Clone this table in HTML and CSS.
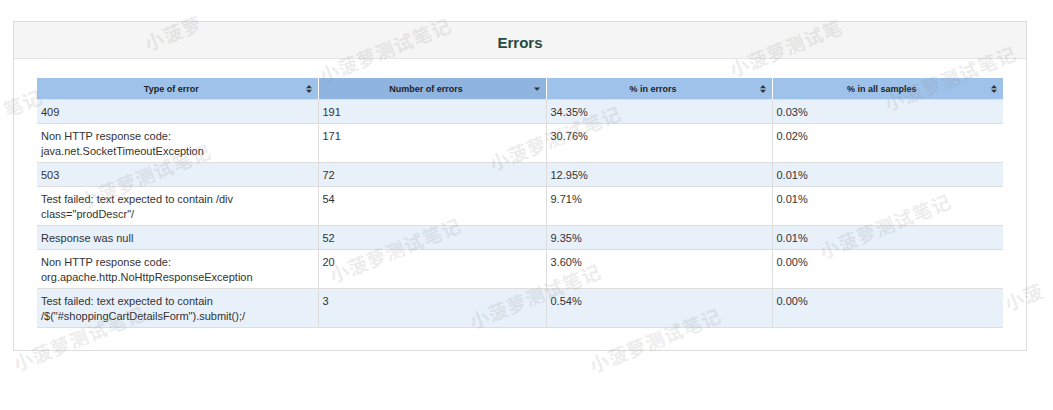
FILE: index.html
```html
<!DOCTYPE html>
<html>
<head>
<meta charset="utf-8">
<link rel="stylesheet" href="styles.css">
</head>
<body>
<div class="panel">
  <div class="panel-heading">Errors</div>
  <div class="panel-body">
    <table class="errors">
      <colgroup>
        <col class="c1"><col class="c2"><col class="c3"><col class="c4">
      </colgroup>
      <thead>
        <tr>
          <th><span class="label">Type of error</span><svg class="sort" viewBox="0 0 6 8"><path d="M3 0L6 3.3H0Z M3 8L6 4.7H0Z"/></svg></th>
          <th class="sorted"><span class="label">Number of errors</span><svg class="sort" viewBox="0 0 6 8"><path d="M0 2.5H6L3 5.8Z"/></svg></th>
          <th><span class="label">% in errors</span><svg class="sort" viewBox="0 0 6 8"><path d="M3 0L6 3.3H0Z M3 8L6 4.7H0Z"/></svg></th>
          <th><span class="label">% in all samples</span><svg class="sort" viewBox="0 0 6 8"><path d="M3 0L6 3.3H0Z M3 8L6 4.7H0Z"/></svg></th>
        </tr>
      </thead>
      <tbody>
        <tr><td>409</td><td>191</td><td>34.35%</td><td>0.03%</td></tr>
        <tr><td>Non HTTP response code:<br>java.net.SocketTimeoutException</td><td>171</td><td>30.76%</td><td>0.02%</td></tr>
        <tr><td>503</td><td>72</td><td>12.95%</td><td>0.01%</td></tr>
        <tr><td>Test failed: text expected to contain /div<br>class="prodDescr"/</td><td>54</td><td>9.71%</td><td>0.01%</td></tr>
        <tr><td>Response was null</td><td>52</td><td>9.35%</td><td>0.01%</td></tr>
        <tr><td>Non HTTP response code:<br>org.apache.http.NoHttpResponseException</td><td>20</td><td>3.60%</td><td>0.00%</td></tr>
        <tr><td>Test failed: text expected to contain<br>/$("#shoppingCartDetailsForm").submit();/</td><td>3</td><td>0.54%</td><td>0.00%</td></tr>
      </tbody>
    </table>
  </div>
</div>
<div class="watermarks" aria-hidden="true">
  <span class="wm" style="left:145px;top:30px">小菠萝</span>
  <span class="wm" style="left:320px;top:62px">小菠萝测试笔记</span>
  <span class="wm" style="left:730px;top:56px">小菠萝测试笔</span>
  <span class="wm" style="left:885px;top:90px">小菠萝测试笔记</span>
  <span class="wm" style="left:4px;top:96px">笔记</span>
  <span class="wm" style="left:490px;top:150px">小菠萝测试笔记</span>
  <span class="wm" style="left:80px;top:188px">小菠萝测试笔记</span>
  <span class="wm" style="left:820px;top:238px">小菠萝测试笔记</span>
  <span class="wm" style="left:330px;top:262px">小菠萝测试笔记</span>
  <span class="wm" style="left:470px;top:308px">小菠萝测试笔记</span>
  <span class="wm" style="left:14px;top:350px">小菠萝测试笔记</span>
  <span class="wm" style="left:590px;top:352px">小菠萝测试笔记</span>
  <span class="wm" style="left:1005px;top:290px">小菠</span>
</div>
</body>
</html>
```

FILE: styles.css
```css
html, body {
  margin: 0;
  padding: 0;
  background: #ffffff;
}
body {
  font-family: "Liberation Sans", Arial, Helvetica, sans-serif;
  color: #333333;
  position: relative;
  width: 1053px;
  height: 410px;
  overflow: hidden;
}
.panel {
  margin: 21px 26px 0 13px;
  border: 1px solid #dcdcdc;
  background: #ffffff;
}
.panel-heading {
  height: 30px;
  padding-top: 6px;
  line-height: 30px;
  background: #f5f5f5;
  border-bottom: 1px solid #e3e3e3;
  text-align: center;
  font-size: 15px;
  font-weight: bold;
  color: #24493f;
}
.panel-body {
  padding: 19px 23px 22px 23px;
}
.errors {
  width: 966px;
  border-collapse: collapse;
  table-layout: fixed;
  font-size: 11px;
}
.c1 { width: 281px; }
.c2 { width: 228px; }
.c3 { width: 226px; }
.c4 { width: 231px; }
.errors th {
  position: relative;
  height: 21px;
  padding: 0 16px 0 4px;
  background: #9fc2ea;
  border-left: 1px solid #ffffff;
  border-bottom: 1px solid #d8e2ee;
  font-size: 9px;
  font-weight: bold;
  color: #222222;
  text-align: center;
}
.errors th:first-child {
  border-left: none;
}
.errors th.sorted {
  background: #8fb4e0;
}
.sort {
  position: absolute;
  right: 6px;
  top: 7px;
  width: 6px;
  height: 8px;
  fill: #333333;
}
.errors td {
  padding: 5px 4px 3px 4px;
  line-height: 15px;
  vertical-align: top;
  border: 1px solid #dddddd;
  border-top: none;
  color: #333333;
}
.errors tbody tr:nth-child(odd) td {
  background: #e8f0fa;
}
.errors tbody tr td:first-child {
  border-left: none;
}
.errors tbody tr td:last-child {
  border-right: none;
}
.watermarks {
  position: absolute;
  left: 0;
  top: 0;
  width: 1053px;
  height: 410px;
  pointer-events: none;
}
.wm {
  position: absolute;
  font-family: "Noto Sans CJK SC", sans-serif;
  font-weight: bold;
  font-size: 19px;
  letter-spacing: 1px;
  color: rgba(140, 140, 140, 0.18);
  transform: rotate(-22deg);
  transform-origin: left center;
  white-space: nowrap;
}
```
